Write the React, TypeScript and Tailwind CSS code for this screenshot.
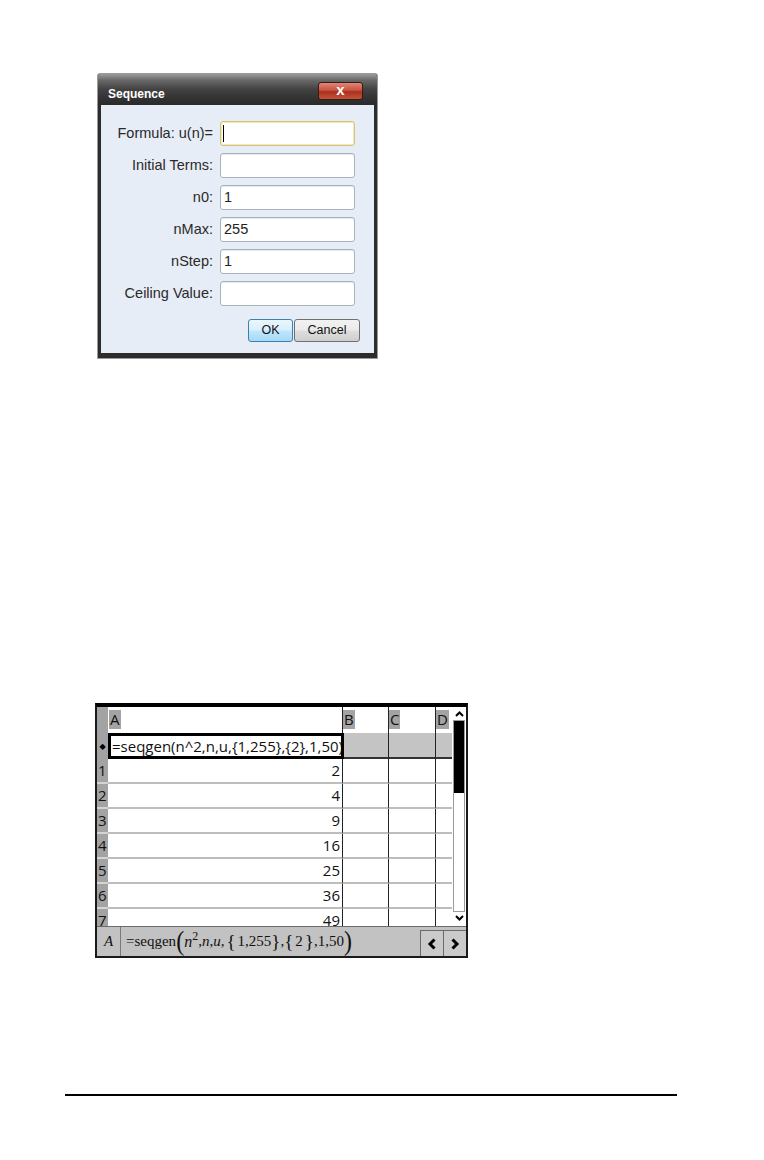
import React from "react";

const sans = { fontFamily: '"Liberation Sans", Arial, sans-serif' };
const sheetFont = { fontFamily: '"Open Sans", "DejaVu Sans", sans-serif' };
const serif = { fontFamily: '"Liberation Serif", "Times New Roman", serif' };

function Field({ label, value, focused }: { label: string; value?: string; focused?: boolean }) {
  return (
    <div className="flex items-center h-[25px]">
      <div className="w-[112px] text-right text-[14.5px] text-[#2a2a2a] leading-none" style={sans}>
        {label}
      </div>
      <div
        className={
          focused
            ? "ml-[7px] w-[135px] h-[25px] rounded-[3px] border border-[#d6c27a] bg-white flex items-center pl-[2px] shadow-[inset_0_0_0_1px_#f3e8b8]"
            : "ml-[7px] w-[135px] h-[25px] rounded-[3px] border border-[#abb3bd] bg-white flex items-center pl-[3px] shadow-[inset_0_1px_1px_#e3e6ea]"
        }
      >
        {focused ? <div className="w-[1px] h-[17px] bg-black" /> : null}
        {value ? (
          <span className="text-[14.5px] text-[#222] leading-none" style={sans}>
            {value}
          </span>
        ) : null}
      </div>
    </div>
  );
}

function Dialog() {
  return (
    <div className="w-[281px] h-[286px] border border-[#9a9a9a] bg-[#2c2c2c] flex flex-col rounded-t-[3px] overflow-hidden">
      <div className="h-[30px] flex justify-between bg-[linear-gradient(to_bottom,#9c9c9c_0%,#6a6a6a_20%,#434343_50%,#333333_80%,#2b2b2b_100%)]">
        <div className="ml-[10px] mt-[13px] text-[12px] font-bold text-white leading-[14px]" style={sans}>
          Sequence
        </div>
        <div className="mt-[8px] mr-[14px] w-[45px] h-[18px] rounded-[3px] border border-[#3a1a14] bg-[linear-gradient(to_bottom,#e0897a_0%,#c9523e_45%,#a9301c_55%,#c4553c_100%)] flex items-center justify-center">
          <span className="text-white text-[15px] font-bold leading-none -mt-[3px]" style={sans}>
            x
          </span>
        </div>
      </div>
      <div className="mx-[3px] mt-[1px] h-[248px] bg-[#e7edf6] flex flex-col pt-[16px] gap-[7px]">
        <Field label="Formula: u(n)=" focused />
        <Field label="Initial Terms:" />
        <Field label="n0:" value="1" />
        <Field label="nMax:" value="255" />
        <Field label="nStep:" value="1" />
        <Field label="Ceiling Value:" />
        <div className="flex justify-end pr-[14px] mt-[6px]">
          <div
            className="w-[45px] h-[23px] rounded-[3px] border border-[#3c7fb1] bg-[linear-gradient(to_bottom,#eaf6fd_0%,#d9f0fc_45%,#bee6fd_55%,#a7d9f5_100%)] flex items-center justify-center text-[12.5px] text-[#111]"
            style={sans}
          >
            OK
          </div>
          <div
            className="ml-[1px] w-[66px] h-[23px] rounded-[3px] border border-[#707070] bg-[linear-gradient(to_bottom,#f2f2f2_0%,#ebebeb_45%,#dddddd_55%,#cfcfcf_100%)] flex items-center justify-center text-[12.5px] text-[#111]"
            style={sans}
          >
            Cancel
          </div>
        </div>
      </div>
      <div className="flex-1" />
    </div>
  );
}

function ColLabel({ t }: { t: string }) {
  return (
    <div className="h-[19px] mt-[2px] px-[1px] bg-[#a3a3a3] text-[15px] leading-[19px] text-[#111] inline-block" style={sheetFont}>
      {t}
    </div>
  );
}

function Sheet() {
  const rows = [
    { n: "1", v: "2" },
    { n: "2", v: "4" },
    { n: "3", v: "9" },
    { n: "4", v: "16" },
    { n: "5", v: "25" },
    { n: "6", v: "36" },
    { n: "7", v: "49" },
  ];
  return (
    <div className="w-[373px] h-[255px] border-2 border-[#1a1a1a] border-t-[4px] border-t-black flex flex-col bg-white" style={sheetFont}>
      <div className="h-[219px] flex overflow-hidden">
        <div className="w-[355px] flex flex-col">
          <div className="h-[26px] flex shrink-0">
            <div className="w-[11px] bg-[#a3a3a3]" />
            <div className="w-[235px] border-r border-[#222] pl-[1px]">
              <ColLabel t="A" />
            </div>
            <div className="w-[46px] border-r border-[#222]">
              <ColLabel t="B" />
            </div>
            <div className="w-[47px] border-r border-[#222]">
              <ColLabel t="C" />
            </div>
            <div className="w-[16px]">
              <ColLabel t="D" />
            </div>
          </div>
          <div className="h-[26px] flex shrink-0">
            <div className="w-[11px] bg-[#a3a3a3] flex items-center justify-center text-[8px] leading-none text-black">
              ◆
            </div>
            <div className="w-[236px] -mr-[1px] border-[3px] border-black bg-white flex items-center pl-[1px] text-[15px] text-[#111] leading-none whitespace-nowrap overflow-hidden relative z-10">
              =seqgen(n^2,n,u,{"{"}1,255{"}"},{"{"}2{"}"},1,50)
            </div>
            <div className="w-[46px] bg-[#c4c4c4] border-r border-[#222] border-b-2 border-b-[#333]" />
            <div className="w-[47px] bg-[#c4c4c4] border-r border-[#222] border-b-2 border-b-[#333]" />
            <div className="w-[16px] bg-[#c4c4c4] border-b-2 border-b-[#333]" />
          </div>
          {rows.map((r) => (
            <div key={r.n} className="h-[25px] flex shrink-0">
              <div className="w-[11px] bg-[#a3a3a3] border-b-2 border-[#d4d4d4] text-[15px] leading-[23px] text-[#111] pl-[1px]">
                {r.n}
              </div>
              <div className="w-[235px] border-r border-[#222] border-b-2 border-b-[#bdbdbd] text-right pr-[2px] text-[15px] leading-[23px] text-[#111]">
                {r.v}
              </div>
              <div className="w-[46px] border-r border-[#222] border-b-2 border-b-[#bdbdbd]" />
              <div className="w-[47px] border-r border-[#222] border-b-2 border-b-[#bdbdbd]" />
              <div className="w-[16px] border-b-2 border-b-[#bdbdbd]" />
            </div>
          ))}
        </div>
        <div className="w-[14px] flex flex-col items-center bg-white">
          <div className="h-[12px] w-[12px] flex items-center justify-center mt-[1px]">
            <svg width="9" height="6" viewBox="0 0 9 6">
              <polyline points="1,5 4.5,1.5 8,5" fill="none" stroke="#000" strokeWidth="2" />
            </svg>
          </div>
          <div className="flex-1 w-[12px] border border-[#9a9a9a] flex flex-col">
            <div className="h-[72px] bg-black" />
          </div>
          <div className="h-[12px] w-[12px] flex items-center justify-center mb-[2px]">
            <svg width="9" height="6" viewBox="0 0 9 6">
              <polyline points="1,1 4.5,4.5 8,1" fill="none" stroke="#000" strokeWidth="2" />
            </svg>
          </div>
        </div>
      </div>
      <div className="h-[30px] flex bg-[#c2c2c2] border-t border-[#6a6a6a]">
        <div className="w-[24px] border-r border-[#7a7a7a] flex items-center justify-center text-[15px] italic text-[#111]" style={serif}>
          A
        </div>
        <div className="w-[299px] flex items-center pl-[5px] text-[15px] text-[#111] whitespace-nowrap" style={serif}>
          <span>=seqgen</span>
          <span className="inline-block text-[24px] leading-none scale-y-[1.15] -mt-[2px] font-light">(</span>
          <i className="text-[16px]">n</i>
          <sup className="text-[12px] -top-[6px] relative">2</sup>
          <span>,</span>
          <i>n</i>
          <span>,</span>
          <i>u</i>
          <span>,</span>
          <span className="text-[19px] leading-none mx-[2px]">{"{"}</span>
          <span>1,255</span>
          <span className="text-[19px] leading-none">{"}"}</span>
          <span>,</span>
          <span className="text-[19px] leading-none mr-[2px]">{"{"}</span>
          <span>2</span>
          <span className="text-[19px] leading-none ml-[2px]">{"}"}</span>
          <span>,1,50</span>
          <span className="inline-block text-[24px] leading-none scale-y-[1.15] -mt-[2px] font-light">)</span>
        </div>
        <div className="w-[23px] border-l border-t border-[#6a6a6a] bg-[#cacaca] flex items-center justify-center mt-[3px]">
          <svg width="10" height="12" viewBox="0 0 10 12">
            <polyline points="7.5,1.5 3,6 7.5,10.5" fill="none" stroke="#000" strokeWidth="3" />
          </svg>
        </div>
        <div className="w-[23px] border-l border-t border-[#6a6a6a] bg-[#cacaca] flex items-center justify-center mt-[3px]">
          <svg width="10" height="12" viewBox="0 0 10 12">
            <polyline points="2.5,1.5 7,6 2.5,10.5" fill="none" stroke="#000" strokeWidth="3" />
          </svg>
        </div>
      </div>
    </div>
  );
}

export default function App() {
  return (
    <div className="w-[764px] h-[1160px] bg-white overflow-hidden">
      <div className="pt-[73px] pl-[97px]">
        <Dialog />
      </div>
      <div className="mt-[344px] ml-[95px]">
        <Sheet />
      </div>
      <div className="mt-[136px] ml-[65px] w-[612px] h-[2px] bg-black" />
    </div>
  );
}
